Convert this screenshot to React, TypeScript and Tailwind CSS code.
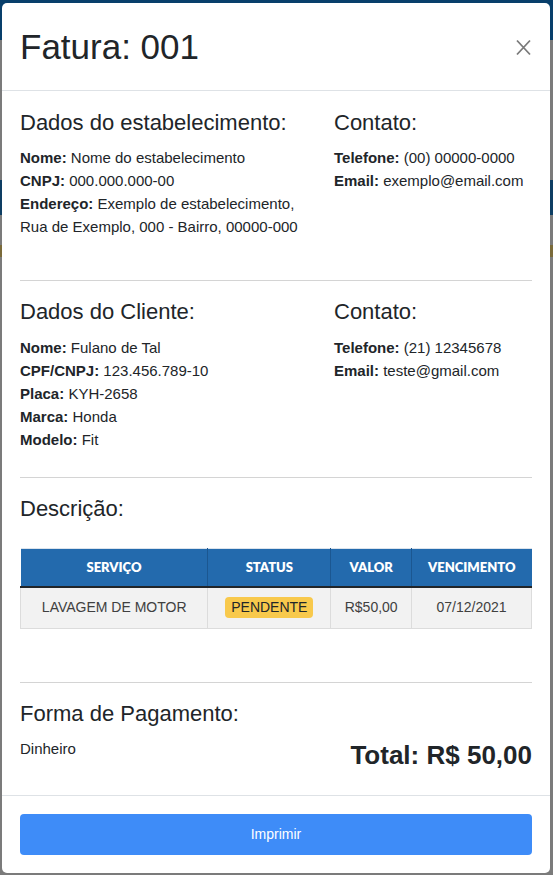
import React from "react";

const F = { fontFamily: '"Liberation Sans", Arial, sans-serif' };

function Line({ label, value }: { label: string; value: string }) {
  return (
    <div className="text-[15px] leading-[23px] text-[#212529]">
      <span className="font-bold">{label}</span> {value}
    </div>
  );
}

export default function App() {
  return (
    <div className="relative h-[875px] w-[553px] overflow-hidden bg-[#7b7b7b]" style={F}>
      <div className="flex flex-col">
        <div className="h-[40px] bg-[#083f6b]" />
        <div className="h-[140px] bg-[#7b7b7b]" />
        <div className="h-[35px] bg-[#0e3e63]" />
        <div className="h-[30px] bg-[#7b7b7b]" />
        <div className="h-[12px] bg-[#7a6a3a]" />
      </div>

      <div className="absolute left-[2px] top-[3px] w-[548px] rounded-[5px] bg-white">
        {/* header */}
        <div className="flex h-[88px] items-center justify-between border-b border-[#dee2e6] pl-[18px] pr-[19px]">
          <h1 className="text-[35px] leading-none text-[#212529]">Fatura: 001</h1>
          <svg width="15" height="17" viewBox="0 0 15 17" className="mt-[2px]">
            <path d="M1 1.5 L14 15.5 M14 1.5 L1 15.5" stroke="#7a7a7a" strokeWidth="1.8" fill="none" />
          </svg>
        </div>

        {/* body */}
        <div className="px-[18px] pt-[20px]">
          <div className="flex">
            <div className="w-[314px]">
              <h2 className="text-[22px] leading-[24px] text-[#212529]">Dados do estabelecimento:</h2>
              <div className="mt-[11px]">
                <Line label="Nome:" value="Nome do estabelecimento" />
                <Line label="CNPJ:" value="000.000.000-00" />
                <div className="w-[300px] text-[15px] leading-[23px] text-[#212529]">
                  <span className="font-bold">Endereço:</span> Exemplo de estabelecimento, Rua de Exemplo, 000 - Bairro, 00000-000
                </div>
              </div>
            </div>
            <div>
              <h2 className="text-[22px] leading-[24px] text-[#212529]">Contato:</h2>
              <div className="mt-[11px]">
                <Line label="Telefone:" value="(00) 00000-0000" />
                <Line label="Email:" value="exemplo@email.com" />
              </div>
            </div>
          </div>

          <hr className="mt-[42px] border-[#d4d4d4]" />

          <div className="mt-[19px] flex">
            <div className="w-[314px]">
              <h2 className="text-[22px] leading-[24px] text-[#212529]">Dados do Cliente:</h2>
              <div className="mt-[12px]">
                <Line label="Nome:" value="Fulano de Tal" />
                <Line label="CPF/CNPJ:" value="123.456.789-10" />
                <Line label="Placa:" value="KYH-2658" />
                <Line label="Marca:" value="Honda" />
                <Line label="Modelo:" value="Fit" />
              </div>
            </div>
            <div>
              <h2 className="text-[22px] leading-[24px] text-[#212529]">Contato:</h2>
              <div className="mt-[12px]">
                <Line label="Telefone:" value="(21) 12345678" />
                <Line label="Email:" value="teste@gmail.com" />
              </div>
            </div>
          </div>

          <hr className="mt-[26px] border-[#d4d4d4]" />

          <h2 className="mt-[19px] text-[22px] leading-[24px] text-[#212529]">Descrição:</h2>

          <table className="mt-[27px] w-[512px] border-collapse text-center">
            <thead>
              <tr
                className="h-[38px] border-t border-[#dbe3ec] bg-[#236aad] text-[13px] font-extrabold text-white"
                style={{ fontFamily: 'Lato, "Open Sans", sans-serif' }}
              >
                <th className="w-[188px] border-b-2 border-b-[#212529] font-extrabold">SERVIÇO</th>
                <th className="w-[123px] border-b-2 border-l border-b-[#212529] border-l-[#1b5791] font-extrabold">STATUS</th>
                <th className="w-[81px] border-b-2 border-l border-b-[#212529] border-l-[#1b5791] font-extrabold">VALOR</th>
                <th className="w-[120px] border-b-2 border-l border-b-[#212529] border-l-[#1b5791] font-extrabold">VENCIMENTO</th>
              </tr>
            </thead>
            <tbody>
              <tr className="h-[42px] bg-[#f2f2f2] text-[14px] text-[#404040]">
                <td className="border border-[#dcdcdc]">LAVAGEM DE MOTOR</td>
                <td className="border border-[#dcdcdc]">
                  <span className="inline-block rounded-[4px] bg-[#f8c94c] px-[6px] text-[14px] leading-[21px] text-[#212529]">
                    PENDENTE
                  </span>
                </td>
                <td className="border border-[#dcdcdc]">R$50,00</td>
                <td className="border border-[#dcdcdc]">07/12/2021</td>
              </tr>
            </tbody>
          </table>

          <hr className="mt-[53px] border-[#d4d4d4]" />

          <h2 className="mt-[19px] text-[22px] leading-[24px] text-[#212529]">Forma de Pagamento:</h2>
          <div className="mt-[12px] flex items-start justify-between pb-[24px]">
            <div className="text-[15px] leading-[22px] text-[#212529]">Dinheiro</div>
            <div className="mt-[1px] text-[26px] font-bold leading-[32px] text-[#212529]">Total: R$ 50,00</div>
          </div>
        </div>

        {/* footer */}
        <div className="border-t border-[#dee2e6] px-[18px] pb-[18px] pt-[18px]">
          <button className="h-[41px] w-full rounded-[4px] bg-[#3e8cf8] text-[14px] text-white">Imprimir</button>
        </div>
      </div>
    </div>
  );
}
